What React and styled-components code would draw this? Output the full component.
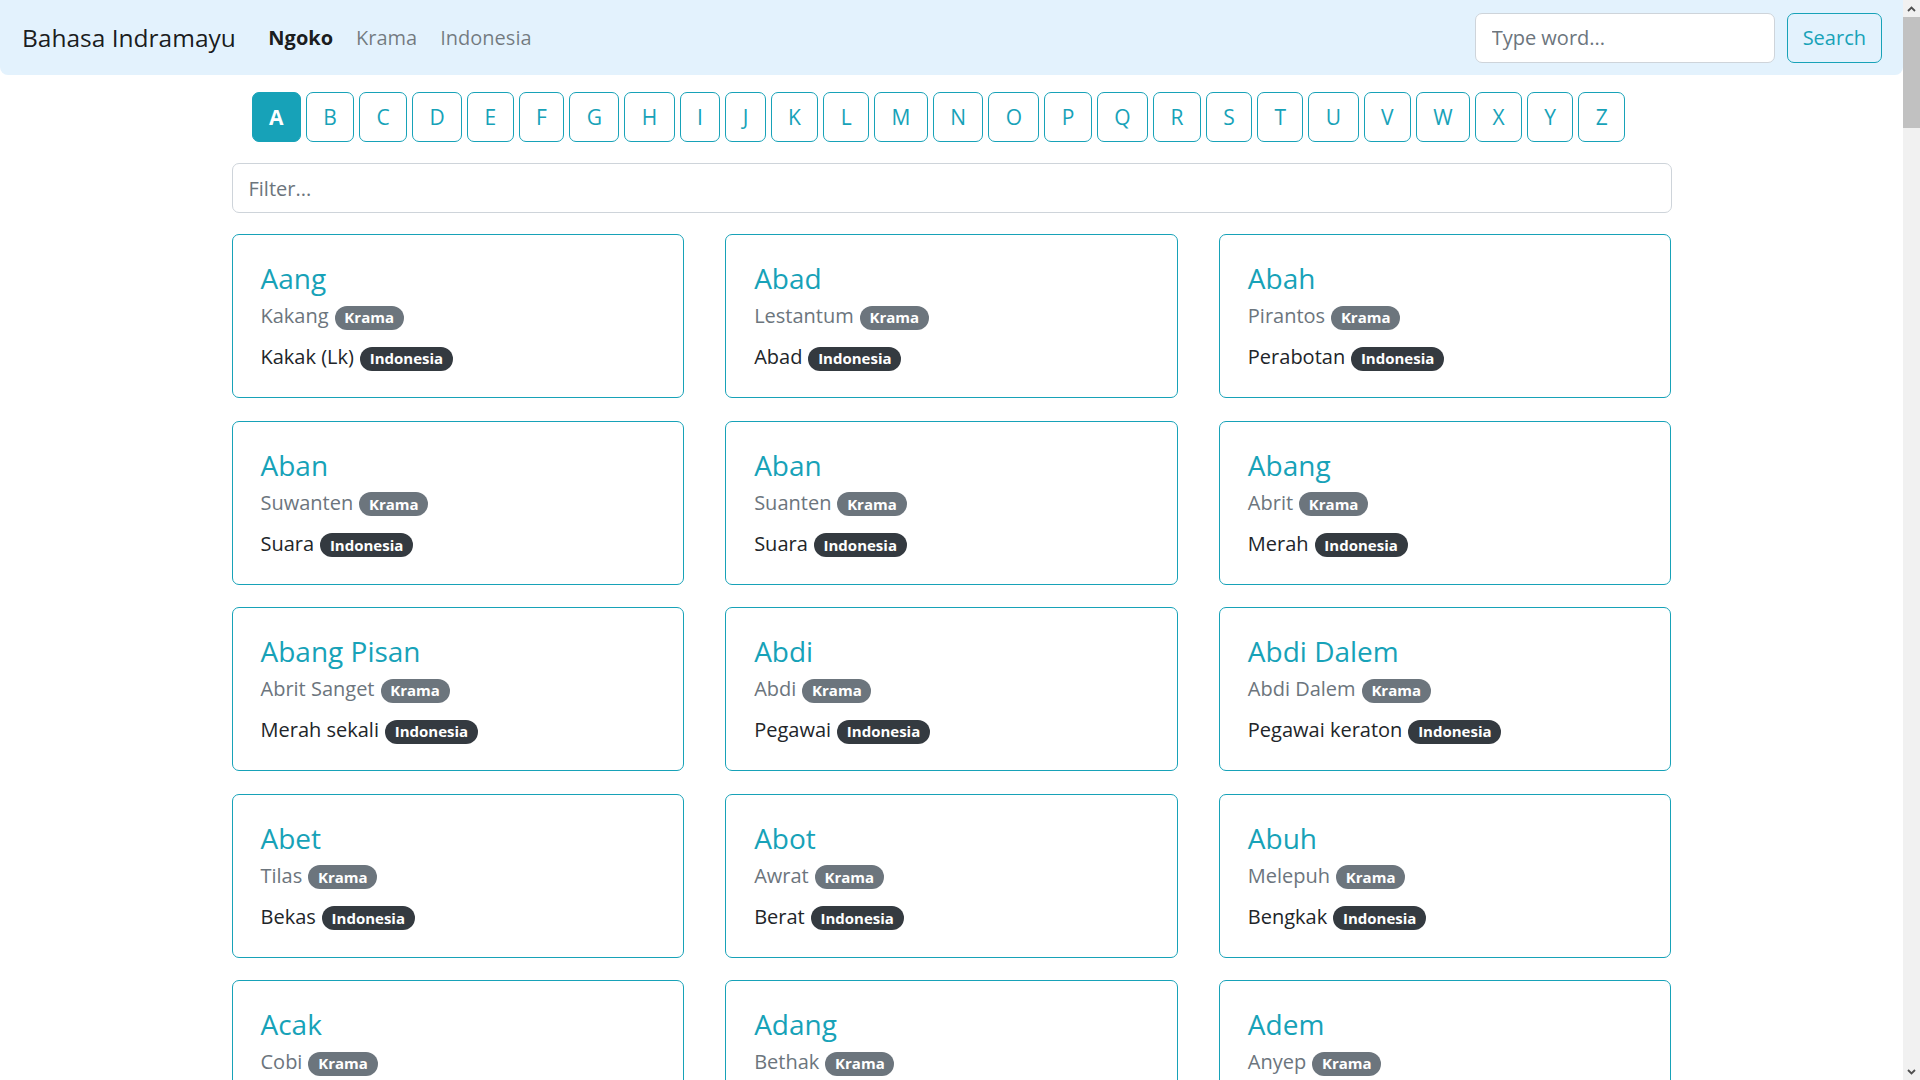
import React from "react";
import styled, { createGlobalStyle } from "styled-components";

const TEAL = "#17a2b8";

const GlobalStyle = createGlobalStyle`
  * { box-sizing: border-box; }
  body {
    margin: 0;
    font-family: "Open Sans", "Noto Sans", "Liberation Sans", sans-serif;
    font-size: 20px;
    color: #212529;
    background: #fff;
  }
`;

const Page = styled.div`
  margin-right: 17px;
`;

const ScrollTrack = styled.div`
  position: fixed;
  top: 0;
  right: 0;
  width: 17px;
  height: 100vh;
  background: #f1f1f1;
  display: flex;
  flex-direction: column;
`;

const ScrollArrow = styled.div`
  width: 17px;
  height: 17px;
  display: flex;
  align-items: center;
  justify-content: center;
`;

const ScrollThumb = styled.div`
  width: 17px;
  height: 111px;
  background: #c1c1c1;
`;

const ScrollSpacer = styled.div`
  flex: 1;
`;

const NavBar = styled.nav`
  display: flex;
  align-items: center;
  height: 75px;
  padding: 0 21px 0 22px;
  background: #e3f2fd;
  border-radius: 0 0 8px 8px;
`;

const Brand = styled.a`
  font-size: 24.5px;
  color: rgba(0, 0, 0, 0.9);
  text-decoration: none;
  margin-right: 21px;
`;

const NavLinks = styled.div`
  display: flex;
  align-items: center;
`;

const NavLink = styled.a`
  padding: 0 11.5px;
  font-size: 20px;
  text-decoration: none;
  color: ${(p) => (p.$active ? "rgba(0,0,0,0.9)" : "rgba(0,0,0,0.5)")};
  font-weight: ${(p) => (p.$active ? 700 : 400)};
`;

const SearchForm = styled.form`
  margin-left: auto;
  display: flex;
  align-items: center;
  gap: 12px;
`;

const SearchInput = styled.input`
  width: 300px;
  height: 50px;
  padding: 0 16px;
  font: inherit;
  font-size: 20px;
  color: #212529;
  border: 1px solid #ced4da;
  border-radius: 7px;
  background: #fff;
  outline: none;
  &::placeholder { color: #6c757d; }
`;

const OutlineButton = styled.button`
  height: 50px;
  padding: 0 15px;
  font: inherit;
  font-size: 20px;
  color: ${TEAL};
  background: transparent;
  border: 1px solid ${TEAL};
  border-radius: 7px;
  cursor: pointer;
`;

const Container = styled.main`
  width: 1440px;
  margin: 0 auto;
`;

const LetterRow = styled.div`
  display: flex;
  gap: 5px;
  margin: 17px 0 0 20px;
`;

const LetterButton = styled.button`
  height: 50px;
  padding: 0 16.4px;
  font: inherit;
  font-size: 21px;
  font-weight: ${(p) => (p.$active ? 700 : 400)};
  color: ${(p) => (p.$active ? "#fff" : TEAL)};
  background: ${(p) => (p.$active ? TEAL : "transparent")};
  border: 1px solid ${TEAL};
  border-radius: 7px;
  cursor: pointer;
`;

const FilterInput = styled.input`
  display: block;
  width: 100%;
  height: 50px;
  margin-top: 21px;
  padding: 0 16px;
  font: inherit;
  font-size: 20px;
  border: 1px solid #ced4da;
  border-radius: 7px;
  outline: none;
  &::placeholder { color: #6c757d; }
`;

const CardGrid = styled.div`
  display: grid;
  grid-template-columns: repeat(3, 1fr);
  column-gap: 41px;
  row-gap: 22.5px;
  margin-top: 21px;
  padding-bottom: 24px;
`;

const Card = styled.div`
  border: 1px solid ${TEAL};
  border-radius: 7px;
  padding: 26px 28px 25px;
`;

const Title = styled.h4`
  margin: 0 0 6px;
  font-size: 28px;
  line-height: 34px;
  font-weight: 400;
  color: ${TEAL};
`;

const Line = styled.div`
  font-size: 20px;
  line-height: 30px;
  color: ${(p) => (p.$muted ? "#6c757d" : "#212529")};
  margin-top: ${(p) => (p.$spaced ? "11px" : "0")};
`;

const Badge = styled.span`
  display: inline-block;
  margin-left: 6px;
  padding: 4.5px 9.75px;
  font-size: 15px;
  line-height: 1;
  font-weight: 700;
  color: #fff;
  border-radius: 50rem;
  background: ${(p) => (p.$dark ? "#343a40" : "#6c757d")};
`;

const LETTERS = "ABCDEFGHIJKLMNOPQRSTUVWXYZ".split("");

const WORDS = [
  ["Aang", "Kakang", "Kakak (Lk)"],
  ["Abad", "Lestantum", "Abad"],
  ["Abah", "Pirantos", "Perabotan"],
  ["Aban", "Suwanten", "Suara"],
  ["Aban", "Suanten", "Suara"],
  ["Abang", "Abrit", "Merah"],
  ["Abang Pisan", "Abrit Sanget", "Merah sekali"],
  ["Abdi", "Abdi", "Pegawai"],
  ["Abdi Dalem", "Abdi Dalem", "Pegawai keraton"],
  ["Abet", "Tilas", "Bekas"],
  ["Abot", "Awrat", "Berat"],
  ["Abuh", "Melepuh", "Bengkak"],
  ["Acak", "Cobi", "Coba"],
  ["Adang", "Bethak", "Menanak nasi"],
  ["Adem", "Anyep", "Dingin"],
];

const Chevron = ({ up }) => (
  <svg width="9" height="6" viewBox="0 0 9 6">
    <path
      d={up ? "M1 5 L4.5 1.5 L8 5" : "M1 1 L4.5 4.5 L8 1"}
      fill="none"
      stroke="#505050"
      strokeWidth="1.8"
    />
  </svg>
);

export default function App() {
  return (
    <>
      <GlobalStyle />
      <Page>
        <NavBar>
          <Brand href="#">Bahasa Indramayu</Brand>
          <NavLinks>
            <NavLink href="#" $active>Ngoko</NavLink>
            <NavLink href="#">Krama</NavLink>
            <NavLink href="#">Indonesia</NavLink>
          </NavLinks>
          <SearchForm onSubmit={(e) => e.preventDefault()}>
            <SearchInput placeholder="Type word..." />
            <OutlineButton type="submit">Search</OutlineButton>
          </SearchForm>
        </NavBar>
        <Container>
          <LetterRow>
            {LETTERS.map((l) => (
              <LetterButton key={l} $active={l === "A"}>{l}</LetterButton>
            ))}
          </LetterRow>
          <FilterInput placeholder="Filter..." />
          <CardGrid>
            {WORDS.map(([ngoko, krama, indo], i) => (
              <Card key={i}>
                <Title>{ngoko}</Title>
                <Line $muted>
                  {krama}
                  <Badge>Krama</Badge>
                </Line>
                <Line $spaced>
                  {indo}
                  <Badge $dark>Indonesia</Badge>
                </Line>
              </Card>
            ))}
          </CardGrid>
        </Container>
      </Page>
      <ScrollTrack aria-hidden="true">
        <ScrollArrow><Chevron up /></ScrollArrow>
        <ScrollThumb />
        <ScrollSpacer />
        <ScrollArrow><Chevron /></ScrollArrow>
      </ScrollTrack>
    </>
  );
}
